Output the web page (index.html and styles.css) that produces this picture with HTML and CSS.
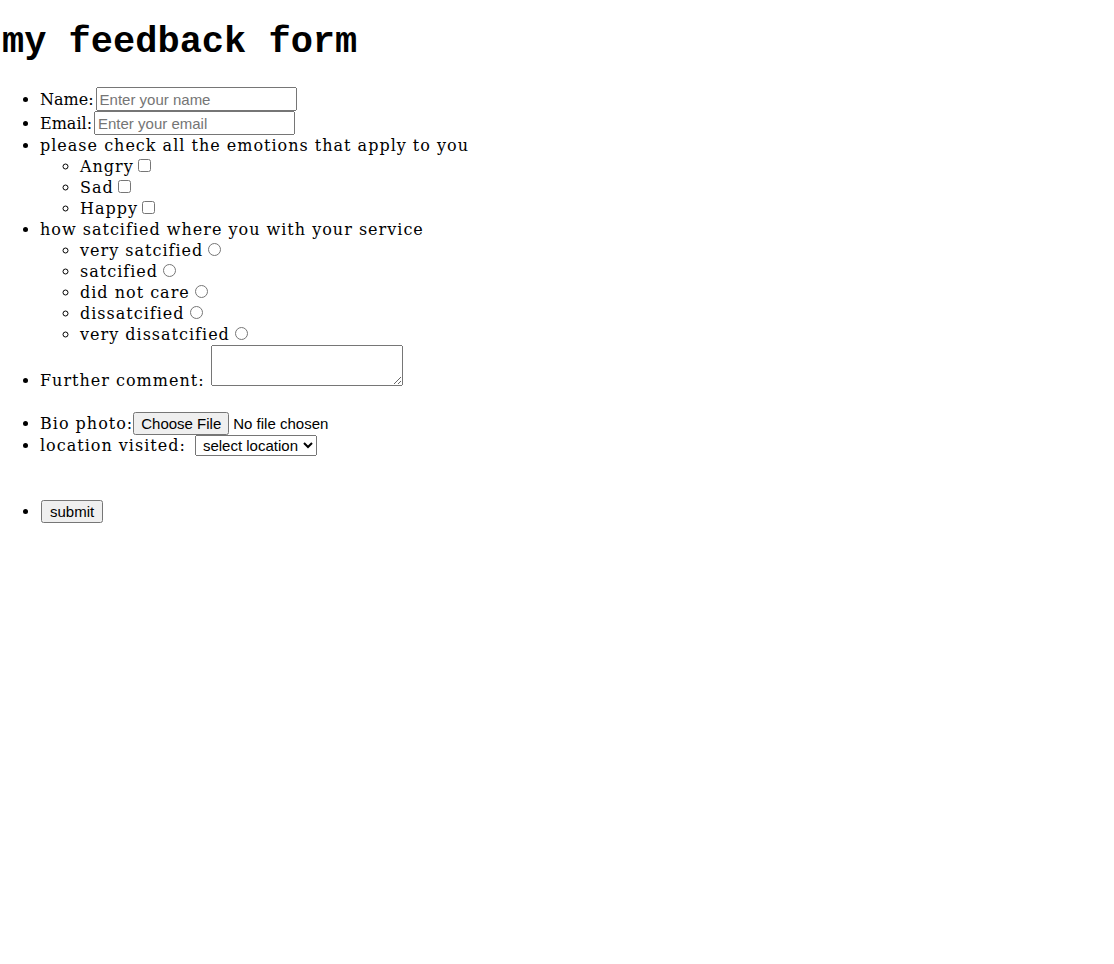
FILE: index.html
```html
<!DOCTYPE html>
<html>
<head>
<meta charset="utf-8">
<title>my feedback form</title>
<link rel="stylesheet" href="styles.css">
</head>
<body>
<h1 class="title">my feedback form</h1>
<form class="form">
<ul class="list">
  <li><span class="tight">Name:</span><input class="text-input" type="text" placeholder="Enter your name"></li>
  <li><span class="tight">Email:</span><input class="text-input" type="email" placeholder="Enter your email"></li>
  <li>please check all the emotions that apply to you
    <ul class="sublist">
      <li>Angry<input type="checkbox"></li>
      <li>Sad<input type="checkbox"></li>
      <li>Happy<input type="checkbox"></li>
    </ul>
  </li>
  <li>how satcified where you with your service
    <ul class="sublist">
      <li>very satcified<input type="radio" name="sat"></li>
      <li>satcified<input type="radio" name="sat"></li>
      <li>did not care<input type="radio" name="sat"></li>
      <li>dissatcified<input type="radio" name="sat"></li>
      <li>very dissatcified<input type="radio" name="sat"></li>
    </ul>
  </li>
  <li>Further comment: <textarea class="comment"></textarea><br><br></li>
  <li>Bio photo:<input class="file" type="file"></li>
  <li>location visited: <select class="select"><option>select location</option><option>Lagos</option><option>Abuja</option></select><br><br><br></li>
  <li class="submit-row"><button class="btn" type="button">submit</button></li>
</ul>
</form>
</body>
</html>
```
FILE: styles.css
```css
body {
  margin: 0;
  font-family: "DejaVu Serif", serif;
  font-size: 16px;
  line-height: 21px;
  letter-spacing: 1px;
  color: #000;
  background: #fff;
}
.title {
  font-family: "Liberation Mono", "Courier New", monospace;
  font-weight: bold;
  font-size: 37px;
  line-height: 42px;
  letter-spacing: 0;
  margin: 21px 0 21px 2px;
}
.list {
  margin: 24px 0 0 0;
  padding-left: 40px;
}
.sublist {
  margin: 0;
  padding-left: 40px;
  list-style-type: circle;
}
.tight {
  letter-spacing: 0;
}
.text-input {
  box-sizing: border-box;
  width: 201px;
  height: 24px;
  font-family: "Liberation Sans", Arial, sans-serif;
  font-size: 15px;
  letter-spacing: 0;
  margin: 0 0 0 2px;
}
.comment {
  box-sizing: border-box;
  width: 192px;
  height: 41px;
  margin: 0;
  vertical-align: baseline;
}
.file, .select, .btn {
  font-family: "Liberation Sans", Arial, sans-serif;
  font-size: 15px;
  letter-spacing: 0;
}
.select {
  box-sizing: border-box;
  width: 122px;
  height: 21px;
  padding: 0 0 0 3px;
  margin-left: 3px;
}
.submit-row {
  padding-top: 2px;
}
.btn {
  padding: 1px 7px;
  margin-left: 1px;
}
```
